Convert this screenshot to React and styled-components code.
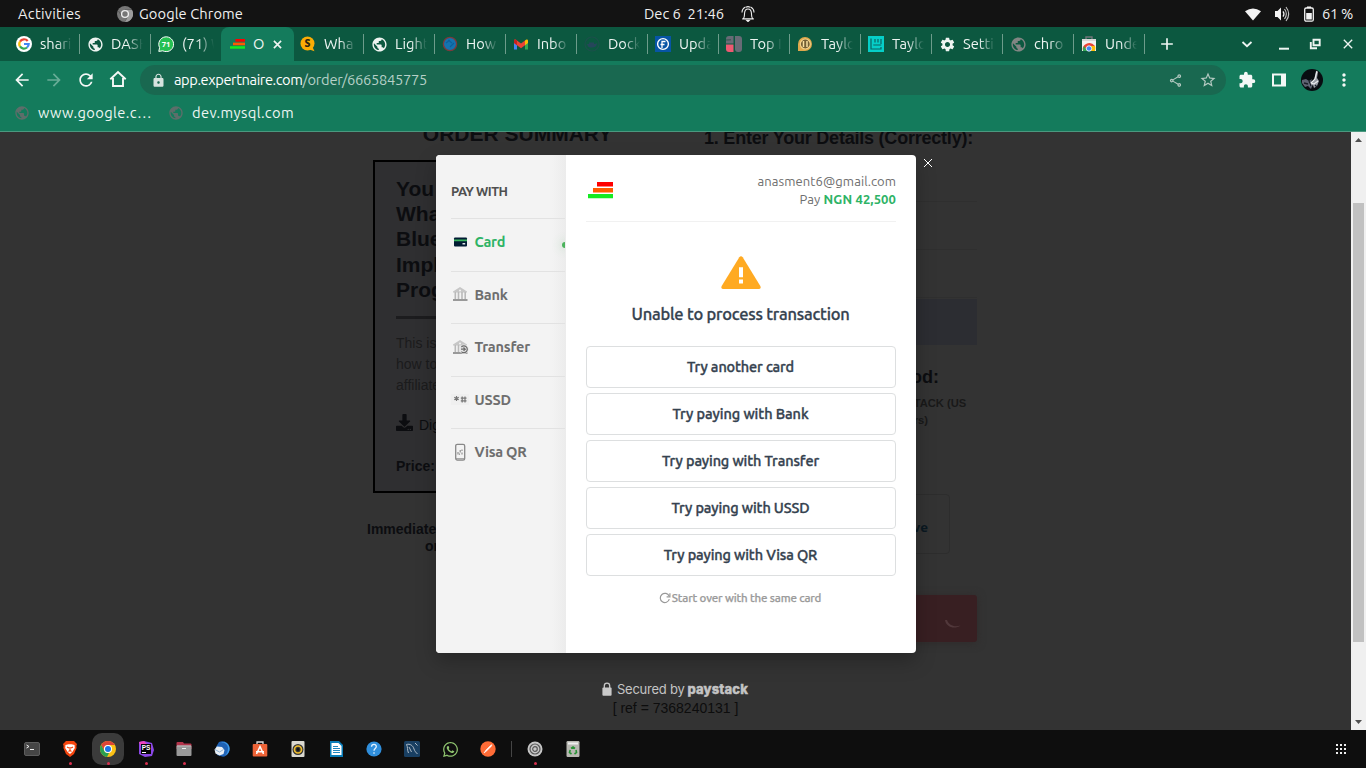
import React, { useLayoutEffect, useRef } from "react";
import styled, { createGlobalStyle, css } from "styled-components";
import {
  MdArrowBack, MdArrowForward, MdRefresh, MdLock, MdOutlineShare, MdStarBorder,
  MdExtension, MdMoreVert, MdSettings, MdPublic, MdClose, MdAdd,
} from "react-icons/md";
import { FaWhatsapp, FaDownload } from "react-icons/fa";

const UI = `"Ubuntu", "Noto Sans", "Open Sans", sans-serif`;
const PAGE = `"Liberation Sans", Arial, sans-serif`;

const Global = createGlobalStyle`
  *, *::before, *::after { box-sizing: border-box; }
  html, body { margin: 0; padding: 0; }
  body { width: 1366px; height: 768px; overflow: hidden; background: #0e0e0e; font-family: ${UI}; }
  svg { display: block; flex: none; }
`;

/* Text tracked so that it fills a fixed measure */
const Run = styled.span`
  display: inline-block;
  white-space: pre;
`;
function Fit({ w, children, className }) {
  const ref = useRef(null);
  useLayoutEffect(() => {
    const el = ref.current;
    el.style.letterSpacing = "0px";
    const natural = el.getBoundingClientRect().width;
    el.style.letterSpacing = `${(w - natural) / el.textContent.length}px`;
  }, [w, children]);
  return <Run ref={ref} className={className}>{children}</Run>;
}

const Desktop = styled.div`
  width: 1366px;
  height: 768px;
  display: flex;
  flex-direction: column;
  overflow: hidden;
`;

/* ---------- system bar ---------- */
const SystemBar = styled.header`
  height: 27px;
  background: #131313;
  color: #f0f0f0;
  font-size: 14.67px;
  line-height: 20px;
  display: grid;
  grid-template-columns: 1fr auto 1fr;
  padding: 4px 13px 3px 18px;
`;
const BarGroup = styled.div`
  display: flex;
  align-items: center;
  gap: ${(p) => p.$gap || 0}px;
  justify-content: ${(p) => (p.$end ? "flex-end" : "flex-start")};
  padding-left: ${(p) => p.$pl || 0}px;
`;
const ClockGroup = styled(BarGroup)` margin-top: -1px; `;

/* ---------- tabs ---------- */
const TabStrip = styled.nav`
  height: 34px;
  background: #0c5840;
  display: flex;
  align-items: stretch;
  padding-left: 9px;
  color: #eef5f2;
`;
const Tab = styled.div`
  width: 71px;
  display: flex;
  align-items: center;
  padding: 0 0 0 7px;
  gap: 8px;
  font-size: 14.67px;
  position: relative;
  ${(p) => p.$active && css`
    background: #147b5c;
    border-radius: 8px 8px 0 0;
    margin: 0 -1px;
    width: 73px;
    padding-left: 8px;
  `}
  ${(p) => p.$line && css`
    &::after {
      content: "";
      position: absolute;
      right: 0;
      top: 7px;
      width: 1px;
      height: 20px;
      background: #6d9c8b;
    }
  `}
`;
const TabTitle = styled.span`
  width: ${(p) => (p.$active ? 12 : 32)}px;
  height: 22px;
  line-height: 22px;
  overflow: hidden;
  white-space: nowrap;
  ${(p) => !p.$active && css`mask-image: linear-gradient(90deg, #000 50%, transparent 100%);`}
`;
const WindowTools = styled.div`
  flex: 1;
  display: flex;
  align-items: center;
  justify-content: space-between;
  padding: 0 10px 0 12px;
`;
const WindowButtons = styled.div`
  display: flex;
  align-items: center;
  gap: 16px;
`;
const TabSearch = styled.div` margin-right: 7px; `;
const RestoreButton = styled.div` margin: 0 1px 0 -1px; `;

/* ---------- toolbar ---------- */
const Toolbar = styled.div`
  height: 38px;
  background: #147b5c;
  display: flex;
  align-items: center;
  padding: 0 11px 0 12px;
  color: #f4f8f6;
`;
const NavButtons = styled.div`
  display: flex;
  gap: 12px;
  width: 128px;
`;
const HomeButton = styled.span` margin-left: 1px; `;
const Omnibox = styled.div`
  width: 1086px;
  flex: none;
  height: 30px;
  border-radius: 15px;
  background: #196850;
  display: flex;
  align-items: center;
  padding: 0 9px 0 11px;
  font-size: 14.67px;
  line-height: 20px;
`;
const Url = styled.div`
  margin-left: 8px;
  flex: 1;
  color: #fff;
`;
const UrlPath = styled(Fit)` color: #b6d0c7; `;
const OmniActions = styled.div`
  display: flex;
  align-items: center;
  gap: 16px;
  color: #b4c9c1;
`;
const Extensions = styled.div`
  flex: 1;
  display: flex;
  align-items: center;
  gap: 14.5px;
  padding-left: 12px;
`;
const MenuButton = styled.div` margin-left: -4px; `;
const Bookmarks = styled.div`
  height: 33px;
  background: #147b5c;
  border-bottom: 1px solid #4b987f;
  display: flex;
  gap: 16px;
  padding: 3px 14px 0;
  font-size: 14.67px;
  line-height: 22px;
  color: #eef6f3;
`;
const Bookmark = styled.div`
  display: flex;
  gap: 8px;
  height: 22px;
  svg { margin-top: 3px; }
`;

/* ---------- web page ---------- */
const Viewport = styled.main`
  height: 598px;
  display: flex;
  position: relative;
  background: #333;
`;
const Page = styled.div`
  width: 1351px;
  height: 598px;
  overflow: hidden;
  font-family: ${PAGE};
  color: #0c0d10;
  display: flex;
  flex-direction: column;
`;
const Columns = styled.div`
  height: 568px;
  display: flex;
  padding-left: 373px;
`;
const Summary = styled.section`
  width: 288px;
  margin-right: 43px;
`;
const SummaryHeading = styled.h2`
  margin: -10px 0 14px 1px;
  font-size: 21px;
  line-height: 24px;
  text-align: center;
`;
const ProductCard = styled.div`
  height: 333px;
  border: 2px solid #000;
  background: #2f2f31;
  padding: 14px 21px;
`;
const ProductTitle = styled.h3`
  margin: 0;
  font-size: 21px;
  line-height: 25.2px;
  padding-bottom: 14px;
  border-bottom: 3px solid #1c1c1e;
`;
const ProductText = styled.p`
  margin: 14px 0 19px;
  font-size: 14px;
  line-height: 21px;
  color: #1b1b1c;
`;
const Digital = styled.div`
  display: flex;
  align-items: center;
  gap: 6px;
  font-size: 14px;
  height: 20px;
  svg { margin-top: -5px; }
`;
const Price = styled.div`
  margin-top: 23px;
  font-size: 14px;
  line-height: 16px;
  font-weight: 700;
`;
const Delivery = styled.div`
  margin: 28px 0 0 -6px;
  font-size: 14px;
  line-height: 17px;
  font-weight: 700;
`;
const Indent = styled.div` padding-left: ${(p) => p.$x}px; `;

const Details = styled.section`
  width: 273px;
  display: flex;
  flex-direction: column;
  align-items: flex-end;
`;
const DetailsHeading = styled.h2`
  margin: -4px 4px 0 0;
  font-size: 18px;
  line-height: 20px;
  white-space: nowrap;
`;
const Field = styled.div`
  width: 100%;
  height: 48px;
  border-bottom: 1px solid #2f2f2f;
  ${(p) => p.$first && css`height: 54px;`}
`;
const FilledField = styled.div`
  width: 100%;
  height: 46px;
  margin-top: 1px;
  background: #2c2d32;
`;
const MethodHeading = styled.h2`
  margin: 22px 38px 0 0;
  font-size: 18px;
  line-height: 20px;
`;
const MethodText = styled.div`
  margin: 8px 9px 0 0;
  font-size: 11.2px;
  line-height: 17px;
  font-weight: 700;
  color: #191919;
`;
const Inset = styled.div` padding-right: ${(p) => p.$r}px; text-align: right; `;
const Method = styled.div`
  width: 120px;
  height: 60px;
  margin: 65px 27px 0 0;
  border: 1px solid #2d2d2d;
  border-radius: 4px;
  padding: 23px 21px;
  text-align: right;
  font: 700 13px/18px "Noto Sans", sans-serif;
  color: #0a1821;
`;
const PayButton = styled.div`
  width: 100%;
  height: 47px;
  flex: none;
  margin-top: 41px;
  border-radius: 3px;
  background: #381f22;
  box-shadow: 0 1px 8px #302b2b;
  display: flex;
  justify-content: flex-end;
  padding: 17px 15px;
`;
const Reference = styled.div`
  text-align: center;
  font-size: 14px;
  line-height: 17px;
  color: #0d0d0d;
`;

const Scrollbar = styled.div`
  width: 15px;
  background: #f0f0f0;
  display: flex;
  flex-direction: column;
  align-items: center;
  padding: 6px 2px;
`;
const Thumb = styled.div`
  width: 11px;
  height: 439px;
  background: #c1c1c1;
  margin: 61px 0 auto;
`;

/* ---------- payment dialog, floating over the page ---------- */
const Dialog = styled.div`
  position: absolute;
  left: 436px;
  top: 23px;
  width: 480px;
  height: 498px;
  display: flex;
  border-radius: 4px;
  overflow: hidden;
  background: #fff;
`;
const DialogShadow = styled.div`
  position: absolute;
  left: 436px;
  top: 23px;
  width: 480px;
  height: 498px;
  border-radius: 4px;
  box-shadow: 0 8px 20px rgba(0, 0, 0, 0.25);
`;
const Channels = styled.aside`
  width: 130px;
  background: linear-gradient(90deg, #f3f3f3 116px, #ececec 130px);
  padding: 26px 1px 0 15px;
  position: relative;
`;
const ChannelsTitle = styled.div`
  height: 37px;
  font-size: 13px;
  line-height: 21px;
  font-weight: 700;
  color: #4f4f4f;
`;
const Channel = styled.div`
  height: 52.5px;
  border-top: 1px solid #e2e2e2;
  display: flex;
  align-items: center;
  gap: 6px;
  padding-bottom: 6px;
  font-size: 14.5px;
  font-weight: 700;
  color: ${(p) => (p.$active ? "#2eb366" : "#6e6e6e")};
  position: relative;
  svg { margin-left: -0.5px; }
  ${(p) => p.$active && css`
    overflow: hidden;
    &::after {
      content: "";
      position: absolute;
      right: -3px;
      top: 23px;
      width: 6px;
      height: 6px;
      border-radius: 3px;
      background: #4bb35c;
      box-shadow: 0 0 10px 3px rgba(76, 180, 92, 0.12);
    }
  `}
`;
const Payment = styled.section`
  width: 350px;
  padding: 0 20px;
`;
const PaymentHead = styled.div`
  height: 67px;
  border-bottom: 1px solid #f1f1f1;
  display: flex;
  justify-content: space-between;
  padding: 17px 0 0 2px;
  font-size: 13px;
  line-height: 18px;
  color: #6e6e6e;
`;
const MerchantLogo = styled.div` padding-top: 10px; `;
const Payer = styled.div` text-align: right; `;
const Amount = styled(Fit)`
  font-weight: 700;
  color: #2eb366;
`;
const Failure = styled.div`
  display: flex;
  flex-direction: column;
  align-items: center;
  padding: 34px 1px 0 0;
  height: 124px;
  font-size: 16.5px;
  line-height: 24px;
  font-weight: 500;
  -webkit-text-stroke: 0.3px #35424f;
  color: #35424f;
  svg { margin-bottom: 13px; }
`;
const Choice = styled.button`
  display: block;
  width: 310px;
  height: 42px;
  margin: 0 0 5px;
  padding: 0 1px 0 0;
  border: 1px solid #dddfe0;
  border-radius: 4px;
  background: #fff;
  color: #35424f;
  font: 500 14.5px/20px ${UI};
  -webkit-text-stroke: 0.35px #35424f;
`;
const Restart = styled.div`
  display: flex;
  align-items: center;
  justify-content: center;
  height: 20px;
  margin-top: 11px;
  padding-right: 2px;
  gap: 1px;
  font-size: 11.5px;
  font-weight: 500;
  -webkit-text-stroke: 0.25px #9b9b9b;
  color: #9b9b9b;
  svg { margin-top: 1px; }
`;
const CloseDialog = styled.div`
  position: absolute;
  left: 923px;
  top: 26px;
`;
const Secured = styled.div`
  position: absolute;
  left: 602px;
  top: 547px;
  display: flex;
  align-items: center;
  height: 20px;
  color: #c4c4c4;
  font: 13px/20px "Inter", sans-serif;
`;
const SecuredText = styled.span` margin: 0 3px 0 5px; `;
const Brand = styled.span`
  font-weight: 800;
  -webkit-text-stroke: 0.4px #c4c4c4;
`;

/* ---------- dock ---------- */
const Dock = styled.footer`
  height: 38px;
  background: #0e0e0e;
  display: flex;
  align-items: center;
  padding: 0 20px 0 13px;
`;
const Launcher = styled.div`
  width: 38px;
  height: 38px;
  display: grid;
  place-items: center;
  position: relative;
  &::before {
    content: "";
    position: absolute;
    inset: 3px;
    border-radius: 10px;
    background: ${(p) => (p.$focus ? "#3b3b3b" : "transparent")};
  }
  &::after {
    content: "";
    position: absolute;
    left: 18px;
    top: 32px;
    width: 3px;
    height: 3px;
    border-radius: 2px;
    background: ${(p) => (p.$running ? "#d9304f" : "transparent")};
  }
  svg { position: relative; }
`;
const DockRule = styled.div`
  width: 1px;
  height: 16px;
  background: #454545;
  margin: 0 4px;
`;
const AppGrid = styled.div`
  margin-left: auto;
  display: grid;
  grid-template-columns: repeat(3, 2px);
  gap: 2px;
  i { width: 2px; height: 2px; background: #eee; }
`;

/* ---------- drawings ---------- */
const Svg = ({ s = 16, w, h, vb = "0 0 16 16", children, ...rest }) => (
  <svg width={w || s} height={h || s} viewBox={vb} fill="none" {...rest}>{children}</svg>
);

const ChromeMono = () => (
  <Svg><circle cx="8" cy="8" r="8" fill="#777" /><path d="M8 4h7M4.6 10 1.5 5M11.4 10 8 16" stroke="#595959" />
    <path d="M8 4h7a8 8 0 0 1-7 12l3.4-6z" fill="#9c9c9c" />
    <circle cx="8" cy="8" r="3.4" fill="#777" stroke="#eee" strokeWidth="1.4" /></Svg>
);
const Bell = () => (
  <Svg w={14} h={16} vb="0 0 14 16" stroke="#eee" strokeWidth="1.1">
    <path d="M1.2 12.9h11.6M2.4 12.5c1.2-1.4 1-3 1.1-4.7C3.6 4.700 5 3 7 3s3.400 1.700 3.500 4.800c.1 1.700-.1 3.300 1.100 4.700M1 6.500C1 4 2.200 2 4.500.9M13 6.500C13 4 11.800 2 9.500.9M5 1.200Q7 0 9 1.200" />
    <path d="M5.600 14.200h2.800L7 15.600z" fill="#eee" />
  </Svg>
);
const Wifi = () => <Svg w={16} h={13} vb="0 0 16 13"><path d="M0 3.200Q8-2.400 16 3.200L8 12.500z" fill="#f3f3f3" /></Svg>;
const Speaker = () => (
  <Svg w={17} h={16} vb="0 0 17 16"><path d="M1 5h2.500L7 1.500v13L3.500 11H1z" fill="#f3f3f3" />
    <path d="M9 5.300q2 2.700 0 5.400" stroke="#f3f3f3" strokeWidth="1.200" /><path d="M10.500 3q3.700 5 0 10M12 1q5.400 7 0 14" stroke="#c5c5c5" strokeWidth="1.100" /></Svg>
);
const Battery = () => (
  <Svg w={10} h={16} vb="0 0 10 16"><path d="M3 .5h4V2H3z" fill="#fff" /><rect x=".7" y="2" width="8.600" height="13.200" rx="1.500" stroke="#f3f3f3" strokeWidth="1.300" />
    <rect x="2.200" y="7" width="5.600" height="6.500" fill="#f3f3f3" /></Svg>
);
const Google = () => (
  <Svg><circle cx="8" cy="8" r="8" fill="#fff" /><g strokeWidth="2.200">
    <path d="M11.700 5A4.700 4.700 0 0 0 4 5.600" stroke="#ea4335" /><path d="M4 5.500a4.700 4.700 0 0 0 0 5" stroke="#fbbc05" />
    <path d="M4 10.400a4.700 4.700 0 0 0 7 1.100" stroke="#34a853" /><path d="M8 8h4.700a4.700 4.700 0 0 1-1.700 3.500" stroke="#4285f4" /></g></Svg>
);
const Globe = ({ c = "#eef4f1", s = 17 }) => <MdPublic size={s} color={c} />;
const WhatsTab = () => (
  <Svg><path d="M.8 15.400l.8-3.800A7.400 7.400 0 1 1 4.800 14.800z" fill="#25c052" stroke="#fff" />
    <text x="8" y="11" fontSize="7.500" fontWeight="700" textAnchor="middle" fill="#fff" fontFamily="Noto Sans, sans-serif">71</text></Svg>
);
const Bars = ({ s = 16 }) => (
  <Svg w={s} h={s * 0.66} vb="0 0 25 16.500"><path d="M9 0h16v4.500H9z" fill="#f00" /><path d="M5 6h20v4.500H5z" fill="#ff5a00" /><path d="M0 12h25v4.200H0z" fill="#15ea22" /></Svg>
);
const Bubble = () => (
  <Svg><circle cx="7.500" cy="7.500" r="7" fill="#fbac05" /><path d="M8 13l6.500 2.300L12 10z" fill="#fbac05" />
    <text x="7.500" y="11.200" fontSize="10.500" fontWeight="800" textAnchor="middle" fill="#2b2412" fontFamily="Noto Sans, sans-serif">S</text></Svg>
);
const RingGlobe = () => (
  <Svg><circle cx="8" cy="8" r="6.600" fill="#1474b0" stroke="#7d3a3c" strokeWidth="1.300" /><path d="M4 7l4-3M8 11l4-4M6 4l4 3" stroke="#0f5f9a" strokeWidth="1.100" /></Svg>
);
const Gmail = () => (
  <Svg><path d="M1 4.500v9h3V7z" fill="#4285f4" /><path d="M15 4.500v9h-3V7z" fill="#34a853" /><path d="M12 4.600l1-.9c.9-.7 2-.1 2 1V7l-3 2.200z" fill="#fbbc04" />
    <path d="M1 7V4.700c0-1.200 1.100-1.700 2-1l5 3.800 4-3v4.700l-4 3-4-3z" fill="#ea4335" /><path d="M1 7V4.700c0-1.100 1-1.700 2-1l1 .8v4.700z" fill="#c5221f" /></Svg>
);
const Docker = () => (
  <Svg><circle cx="8" cy="8" r="7" stroke="#1c504b" strokeWidth="1.200" /><path d="M3 8h8l2-1c0 3-2 4.500-5 4.500S4 11 3 8zM5 6.500h5V8H5z" fill="#25465a" /></Svg>
);
const FMark = () => (
  <Svg><path fill="#0755a5" d="M0 0h16v16H0z" /><circle cx="8" cy="8" r="5.400" stroke="#fff" strokeWidth="1.400" /><path d="M7 12V5.500h3.500M5.500 8.500h4" stroke="#fff" strokeWidth="1.300" /></Svg>
);
const Tiles = () => (
  <Svg><path d="M3 0h4.500v7.500H0V3q0-3 3-3z" fill="#686b76" /><path d="M0 4l5-.2" stroke="#33564f" strokeWidth="1" /><path d="M9 0h4q3 0 3 3v10q0 3-3 3h-1q-3 0-3-3z" fill="#686b76" /><path d="M0 8.500h7.500V16H3q-3 0-3-3z" fill="#ee5972" /></Svg>
);
const Coin = () => (
  <Svg><path d="M1 15V8a7 7 0 1 1 7 7z" fill="#dfa84c" /><circle cx="8.300" cy="8" r="5" fill="#735f35" stroke="#f3d28a" strokeWidth="1.200" /><path d="M6.500 5v6M10 5v6" stroke="#f7dfa0" strokeWidth="1.500" /></Svg>
);
const Band = () => (
  <Svg><path fill="#06cfc8" d="M0 0h16v16H0z" /><path d="M3 2.500V13h10v-2M5.300 9h8M7 3v3.500M10 3v3.500M13 3v5" stroke="#0b6463" strokeWidth="1.200" /></Svg>
);
const Store = () => (
  <Svg><path d="M5 3V1h6v2" stroke="#72767a" strokeWidth="1.400" /><path fill="#f1f1f1" d="M1 3h14v12H1z" /><path d="M1 3h14v2H1z" fill="#d6d6d6" />
    <path d="M2 15a6 6 0 0 1 3-7q5-3 9 2H8z" fill="#ea4335" /><path d="M2 15q-.5-3 1-5l3.500 5z" fill="#34a853" /><path d="M10 10h4q.8 2 0 5h-4z" fill="#fbbc04" /><circle cx="8" cy="12.500" r="2.700" fill="#4285f4" stroke="#fff" strokeWidth=".8" /></Svg>
);
const House = () => <Svg s={18} vb="0 0 18 18"><path d="M1.300 9.300 9 2l7.700 7.300M4 8v8h10V8" stroke="#f4f8f6" strokeWidth="1.900" /></Svg>;
const SidePanel = () => <Svg><path d="M2 2.500h12v11H2z" stroke="#f4f8f6" strokeWidth="2" /><path fill="#f4f8f6" d="M10 2h5v12h-5z" /></Svg>;
const Avatar = () => (
  <Svg s={22} vb="0 0 22 22"><defs><clipPath id="av"><circle cx="11" cy="11" r="11" /></clipPath></defs><g clipPath="url(#av)"><path fill="#080c11" d="M0 0h22v22H0z" />
    <path d="M1 11l4-1 3 2 3-2-1 3 2 2-2 5-3-3-3 1-3-4z" fill="#5e6272" /><path d="M15 2l2 1-1 6 2 3-2 5-3 2-1-3-3 1-1-3 5-3z" fill="#9a9ea8" /><path d="M16 2l-2 8-4 4 3 1 4-3" stroke="#eceef0" strokeWidth="1.100" /><path d="M3 14l4 1M8 12l2 5M14 16l2 2" stroke="#1a1e28" strokeWidth="1.300" /></g></Svg>
);
const Chevron = () => <Svg s={12} vb="0 0 12 12"><path d="M1.500 4 6 8.200 10.500 4" stroke="#eef5f2" strokeWidth="1.800" /></Svg>;
const Minimise = () => <Svg s={16}><path d="M3 12.700h10" stroke="#eef5f2" strokeWidth="2" /></Svg>;
const Restore = () => <Svg s={16}><path d="M6.500 3.800h6.200v5.500H6.500zM3.800 6v6.300H10" stroke="#eef5f2" strokeWidth="1.900" /></Svg>;
const Cross = ({ s }) => <Svg s={s} vb="0 0 10 10"><path d="M1 1l8 8M9 1 1 9" stroke="#eef5f2" strokeWidth="1.800" /></Svg>;

const CardIcon = () => <Svg s={18} vb="0 0 18 18"><rect x="3" y="4.500" width="13" height="9" rx="1" fill="#011b33" /><path fill="#3bb75e" d="M3 6.500h13v1.800H3z" /><path fill="#dce5e9" d="M11.500 10h2.700v1.400h-2.700z" /></Svg>;
const BankIcon = ({ transfer }) => (
  <Svg s={18} vb="0 0 18 18"><path d="M2 6.500 9 2l7 4.500v1H2z" fill="#c6c6c6" /><path d="M4.300 7v7M7.500 7v7M11 7v7M14.200 7v7" stroke="#b9b9b9" strokeWidth="1.600" /><path fill="#999" d="M2 14h14.500v2H2z" /><circle cx="9" cy="5.500" r="1" fill="#f3f3f3" />
    {transfer && <><circle cx="13" cy="11.200" r="4.700" fill="#e5e5e5" /><path d="M10.400 9a3.400 3.400 0 1 1 0 4.600M10 11.200h4M12.500 9.500l1.800 1.700-1.800 1.700" stroke="#6c6c6c" strokeWidth="1.200" /></>}</Svg>
);
const UssdIcon = () => <Svg s={18} vb="0 0 18 18"><path fill="#efefef" d="M0 4h18v11H0z" /><path d="M5.500 6v5M3.300 7.200l4.400 2.600M7.700 7.200 3.300 9.800M11.200 6.500v6M14 6.500v6M9.800 8.200h5.700M9.800 10.800h5.700" stroke="#777" strokeWidth="1.200" /></Svg>;
const QrIcon = () => <Svg s={18} vb="0 0 18 18"><rect x="4.700" y="1.300" width="9" height="15.800" rx="1.600" stroke="#888" strokeWidth="1.300" /><path d="M5 15.800h8.500" stroke="#888" /><path d="M7 9v2.500M8.500 10.500v1.200M9.200 7v2.500M11 6.500v1.500M11 9.500v2" stroke="#888" strokeWidth="1.100" /></Svg>;
const Warning = () => <Svg w={40} h={33} vb="0 0 40 33"><path d="M18.300 1.300q1.700-2.300 3.400 0L39.300 30q1.200 3-1.800 3h-35q-3 0-1.800-3z" fill="#ffaa22" /><path d="M18 11.300h4v10h-4zM18 23.500h4v4h-4z" fill="#fff" /></Svg>;
const Retry = () => <Svg s={12} vb="0 0 12 12"><path d="M10.300 7.200a4.600 4.600 0 1 1-.2-3.100" stroke="#999" strokeWidth="1.200" /><path d="M10.900 1.300v3.500H7.600" stroke="#999" strokeWidth="1.200" /></Svg>;
const Spinner = () => <Svg w={18} h={18} vb="0 0 18 18"><path d="M1 8c1 7.500 10 9.500 15.500 5.500-6 2-11.500 0-13.500-5.500z" fill="#51383b" /></Svg>;
const Padlock = () => <Svg w={10} h={14} vb="0 0 10 14"><path d="M2.300 6V3.800a2.700 2.700 0 0 1 5.400 0V6" stroke="#c9c9c9" strokeWidth="1.300" /><rect x=".4" y="5.500" width="9.200" height="8.200" rx="1" fill="#c9c9c9" /></Svg>;
const Arrow = ({ down }) => <Svg w={7} h={4} vb="0 0 7 4"><path d={down ? "M0 0h7L3.500 4z" : "M0 4h7L3.500 0z"} fill="#505050" /></Svg>;

const Terminal = () => <Svg><rect x=".5" y="1.500" width="15" height="13" rx="1.500" fill="#454545" stroke="#5c5c5c" /><path d="M2.500 4l2.500 1.500L2.500 7M6 8.500h4" stroke="#eee" /></Svg>;
const Brave = () => <Svg><path d="M4 0h8l3 3-.6 2 .2 2L12 13l-4 3-4-3L1.400 7l.2-2L1 3z" fill="#f4450e" /><path d="M3.500 4l3-.7h3l3 .7.300 3-2.300 3.800L8 13l-2.500-2.200L3.200 7z" fill="#fff" /><path d="M5 6l2 1M11 6 9 7M8 6v3M6.500 10.500 8 9.500l1.500 1" stroke="#f4450e" strokeWidth="1.200" /></Svg>;
const Chrome = () => <Svg><circle cx="8" cy="8" r="8" fill="#fbc116" /><path d="M1.100 4A8 8 0 0 1 14.900 4H8a4 4 0 0 0-3.600 6z" fill="#db4437" /><path d="M1.100 4 4.500 10A4 4 0 0 0 8 12l1 0-2 4A8 8 0 0 1 1.100 4z" fill="#2b9f50" /><circle cx="8" cy="8" r="4" fill="#fff" /><circle cx="8" cy="8" r="3" fill="#1a73e8" /></Svg>;
const Storm = () => <Svg><path d="M1 1l5-1 8 2 2 7-2 6-7 1-6-3z" fill="#8a47e5" /><path d="M1 1l5-1 3 3-6 3z" fill="#ee45bd" /><path fill="#050505" d="M3 3h10v10H3z" /><text x="8" y="8.700" fontSize="6.500" fontWeight="700" textAnchor="middle" fill="#fff" fontFamily="Liberation Sans, sans-serif">PS</text><path d="M4 11.500h4" stroke="#fff" /></Svg>;
const Files = () => <Svg><path d="M.5 2q0-1 1-1H7l1 1.500h6.500q1 0 1 1V8H.5z" fill="#b3344b" /><rect x=".5" y="4.500" width="15" height="10.500" rx="1" fill="#999" /><path d="M1 5h14" stroke="#bfbfbf" /><path d="M6 7.500h4" stroke="#eee" /></Svg>;
const Thunderbird = () => <Svg><path d="M5 1c4-2 9 0 10.300 4.500C16.500 10 14 15 9 15.800L3 14 2 6z" fill="#1f62b5" /><path d="M7 1.500c4-.5 7 2 7 6 0 3-1 5-3 7 5-2 5.500-7.500 3.500-10.500C13 1.500 10 .5 7 1.500z" fill="#3d9be9" /><path d="M.5 8.500 3 5.500l5 .5 2.500 3-1 4-4 1.500-4-2z" fill="#e9eff5" /><path d="M1 8.500 5.500 11 9.500 8.500" stroke="#8fb2d4" /></Svg>;
const Software = () => <Svg><path d="M5 3V1h6v2" stroke="#ddd" strokeWidth="1.300" /><rect x=".7" y="3" width="14.600" height="12.500" rx="1" fill="#ee6337" /><path d="M4.500 13 8 5.500l3.500 7.500M4 10.800h8" stroke="#fff" strokeWidth="1.500" /></Svg>;
const Rhythm = () => <Svg><rect x="1.500" y="0" width="13" height="16" rx="1" fill="#dad8d0" /><circle cx="8" cy="8.500" r="5.500" fill="#343434" /><circle cx="8" cy="8.500" r="3.500" stroke="#f0bd2c" strokeWidth="1.700" /><circle cx="8" cy="8.500" r="1.400" fill="#111" /></Svg>;
const Writer = () => <Svg><path d="M2 0h9l4 4v12H2z" fill="#0a7cb7" /><path d="M3.500 2h7l3 3v9h-10z" fill="#fff" /><path d="M5 5.500h5M5 7.500h7M5 9.500h7M5 11.500h7" stroke="#2287bf" /></Svg>;
const Help = () => <Svg><circle cx="8" cy="8" r="7.600" fill="#2f8edb" /><path d="M5.500 5.700C5.700 2.500 10.500 2.700 10.300 5.700 10.200 7.500 8 7.500 8 9.700M8 11.200v1.600" stroke="#e5f3ff" strokeWidth="1.300" /></Svg>;
const Workbench = () => <Svg><rect width="16" height="16" rx="1.500" fill="#193f62" /><path d="M4.500 12C3 9 4 6 2.500 3.500 6 2.500 9 4.500 10 8c.6 2 2 3.500 3.500 5M5 6l2.500 5M11 2l2.500 2.500" stroke="#aebac5" strokeWidth="1" /></Svg>;
const Postman = () => <Svg><circle cx="8" cy="8" r="7.700" fill="#ff6c37" /><path d="M4 12l2-3 4.500-4.500 1.500-.8-.7 1.600L6.500 10z" fill="#fff" stroke="#fff" strokeWidth=".6" /></Svg>;
const Settings = () => <Svg><circle cx="8" cy="8" r="7.500" fill="#c7c7c7" /><circle cx="8" cy="8" r="5" stroke="#575757" strokeWidth="1.200" /><circle cx="8" cy="8" r="2.300" stroke="#575757" strokeWidth="1.200" /></Svg>;
const Trash = () => <Svg><rect x="1.500" y="0" width="13" height="16" rx="1.200" fill="#b8b8b2" /><path d="M3 1.500h10v2H3z" fill="#eee" /><path d="M6 7.300 8 6l2 1.500M11 9l.5 2.500L9.500 13M6.500 13 4.500 11.500 5.200 9" stroke="#279234" strokeWidth="1.600" /></Svg>;

const tabs = [
  { icon: <Google />, title: "shari", line: true },
  { icon: <Globe />, title: "DASH", line: true },
  { icon: <WhatsTab />, title: "(71) W" },
  { icon: <Bars s={15} />, title: "O", active: true },
  { icon: <Bubble />, title: "Wha", line: true },
  { icon: <Globe />, title: "Light", line: true },
  { icon: <RingGlobe />, title: "How", line: true },
  { icon: <Gmail />, title: "Inbo", line: true },
  { icon: <Docker />, title: "Dock", line: true },
  { icon: <FMark />, title: "Upda", line: true },
  { icon: <Tiles />, title: "Top I", line: true },
  { icon: <Coin />, title: "Taylo", line: true },
  { icon: <Band />, title: "Taylo", line: true },
  { icon: <MdSettings size={17} />, title: "Setti", line: true },
  { icon: <Globe c="#818583" />, title: "chro", line: true },
  { icon: <Store />, title: "Unde", line: true },
];
const TabIcon = styled.span`
  width: 16px;
  height: 16px;
  flex: none;
  display: flex;
  align-items: center;
  justify-content: center;
`;

const channels = [
  { name: "Card", w: 30.5, icon: <CardIcon />, active: true },
  { name: "Bank", w: 33, icon: <BankIcon /> },
  { name: "Transfer", w: 55.5, icon: <BankIcon transfer /> },
  { name: "USSD", w: 36.5, icon: <UssdIcon /> },
  { name: "Visa QR", w: 52, icon: <QrIcon /> },
];
const choices = [
  ["Try another card", 107], ["Try paying with Bank", 136], ["Try paying with Transfer", 157],
  ["Try paying with USSD", 138], ["Try paying with Visa QR", 153.5],
];
const launchers = [
  { icon: <Terminal /> }, { icon: <Brave />, running: true }, { icon: <Chrome />, running: true, focus: true },
  { icon: <Storm />, running: true }, { icon: <Files />, running: true }, { icon: <Thunderbird /> }, { icon: <Software /> },
  { icon: <Rhythm /> }, { icon: <Writer /> }, { icon: <Help /> }, { icon: <Workbench /> },
  { icon: <FaWhatsapp size={17} color="#8fc46f" /> }, { icon: <Postman /> },
];

export default function App() {
  return (
    <Desktop>
      <Global />
      <SystemBar>
        <BarGroup $gap={36}>
          <Fit w={63}>Activities</Fit>
          <BarGroup $gap={6}><ChromeMono /><Fit w={104}>Google Chrome</Fit></BarGroup>
        </BarGroup>
        <ClockGroup $gap={17} $pl={28}><Fit w={80}>{"Dec 6  21:46"}</Fit><Bell /></ClockGroup>
        <BarGroup $end $gap={13}><Wifi /><Speaker /><BarGroup $gap={8}><Battery /><Fit w={31}>61 %</Fit></BarGroup></BarGroup>
      </SystemBar>

      <TabStrip>
        {tabs.map((t, i) => (
          <Tab key={i} $active={t.active} $line={t.line}>
            <TabIcon>{t.icon}</TabIcon>
            <TabTitle $active={t.active}>{t.title}</TabTitle>
            {t.active && <Cross s={9} />}
          </Tab>
        ))}
        <WindowTools>
          <MdAdd size={20} />
          <WindowButtons><TabSearch><Chevron /></TabSearch><Minimise /><RestoreButton><Restore /></RestoreButton><MdClose size={16} /></WindowButtons>
        </WindowTools>
      </TabStrip>

      <Toolbar>
        <NavButtons><MdArrowBack size={20} /><MdArrowForward size={20} color="#68ac97" /><MdRefresh size={20} /><HomeButton><House /></HomeButton></NavButtons>
        <Omnibox>
          <MdLock size={15} color="#d7e3df" />
          <Url><Fit w={128.5}>app.expertnaire.com</Fit><UrlPath w={124.5}>/order/6665845775</UrlPath></Url>
          <OmniActions><MdOutlineShare size={15} /><MdStarBorder size={18} /></OmniActions>
        </Omnibox>
        <Extensions><MdExtension size={18} /><SidePanel /><Avatar /><MenuButton><MdMoreVert size={20} /></MenuButton></Extensions>
      </Toolbar>

      <Bookmarks>
        <Bookmark><Globe c="#5d6e6a" s={16} /><Fit w={114}>www.google.c…</Fit></Bookmark>
        <Bookmark><Globe c="#5d6e6a" s={16} /><Fit w={102}>dev.mysql.com</Fit></Bookmark>
      </Bookmarks>

      <Viewport>
        <Page>
          <Columns>
            <Summary>
              <SummaryHeading>ORDER SUMMARY</SummaryHeading>
              <ProductCard>
                <ProductTitle>You<br />Wha<br />Blue<br />Impl<br />Prog</ProductTitle>
                <ProductText>This is<br />how to<br />affiliate</ProductText>
                <Digital><FaDownload size={17} /><span>Dig</span></Digital>
                <Price>Price:</Price>
              </ProductCard>
              <Delivery>Immediate<Indent $x={58}>or</Indent></Delivery>
            </Summary>
            <Details>
              <DetailsHeading><Fit w={269}>1. Enter Your Details (Correctly):</Fit></DetailsHeading>
              <Field $first /><Field /><Field />
              <FilledField />
              <MethodHeading>od:</MethodHeading>
              <MethodText>TACK (US<Inset $r={40}>rs)</Inset></MethodText>
              <Method>ve</Method>
              <PayButton><Spinner /></PayButton>
            </Details>
          </Columns>
          <Reference>[ ref = 7368240131 ]</Reference>
        </Page>
        <Scrollbar><Arrow /><Thumb /><Arrow down /></Scrollbar>

        <DialogShadow />
        <Dialog>
          <Channels>
            <ChannelsTitle><Fit w={56.5}>PAY WITH</Fit></ChannelsTitle>
            {channels.map((c) => (
              <Channel key={c.name} $active={c.active}>{c.icon}<Fit w={c.w}>{c.name}</Fit></Channel>
            ))}
          </Channels>
          <Payment>
            <PaymentHead>
              <MerchantLogo><Bars s={25} /></MerchantLogo>
              <Payer>
                <div><Fit w={138.5}>anasment6@gmail.com</Fit></div>
                <div><Fit w={24}>{"Pay "}</Fit><Amount w={72.5}>NGN 42,500</Amount></div>
              </Payer>
            </PaymentHead>
            <Failure><Warning /><Fit w={218}>Unable to process transaction</Fit></Failure>
            {choices.map(([label, w]) => <Choice key={label}><Fit w={w}>{label}</Fit></Choice>)}
            <Restart><Retry /><Fit w={149.5}>Start over with the same card</Fit></Restart>
          </Payment>
        </Dialog>
        <CloseDialog><Svg s={10} vb="0 0 10 10"><path d="M1 1l8 8M9 1 1 9" stroke="#fff" strokeWidth="1" /></Svg></CloseDialog>
        <Secured><Padlock /><SecuredText><Fit w={67.5}>Secured by</Fit></SecuredText><Brand><Fit w={60.5}>paystack</Fit></Brand></Secured>
      </Viewport>

      <Dock>
        {launchers.map((l, i) => <Launcher key={i} $running={l.running} $focus={l.focus}>{l.icon}</Launcher>)}
        <DockRule />
        <Launcher $running><Settings /></Launcher>
        <Launcher><Trash /></Launcher>
        <AppGrid>{Array.from({ length: 9 }, (_, i) => <i key={i} />)}</AppGrid>
      </Dock>
    </Desktop>
  );
}
